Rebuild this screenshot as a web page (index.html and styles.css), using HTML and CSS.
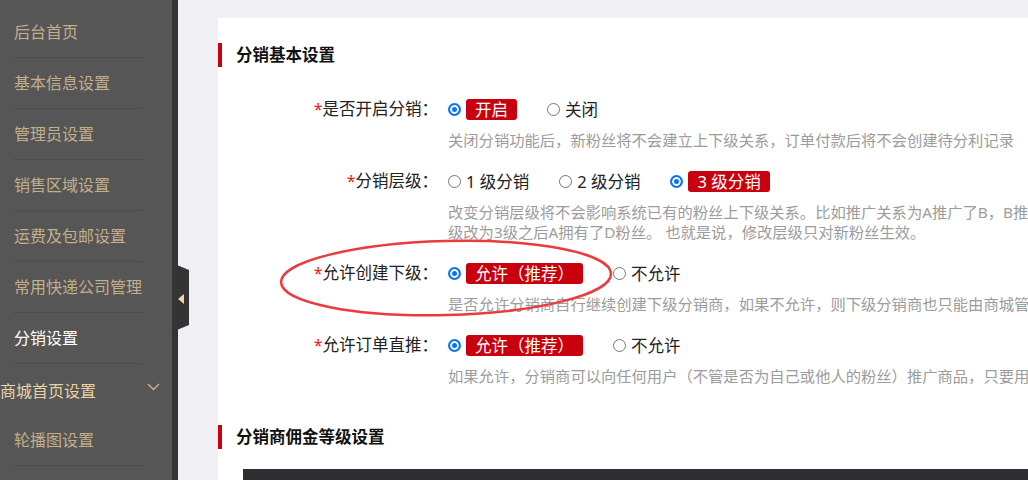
FILE: index.html
```html
<!DOCTYPE html>
<html lang="zh-CN">
<head>
    <meta charset="UTF-8">
    <meta name="viewport" content="width=device-width, initial-scale=1.0">
    <title>分销设置</title>
    <link rel="stylesheet" href="styles.css">
</head>
<body>
    <div class="layout">
        <!-- Sidebar -->
        <div class="sidebar">
            <div class="nav-item">后台首页</div>
            <div class="nav-item">基本信息设置</div>
            <div class="nav-item">管理员设置</div>
            <div class="nav-item">销售区域设置</div>
            <div class="nav-item">运费及包邮设置</div>
            <div class="nav-item">常用快递公司管理</div>
            <div class="nav-item active">分销设置</div>
            <div class="nav-group">
                <span>商城首页设置</span>
                <svg class="chevron" width="13" height="8" viewBox="0 0 13 8"><polyline points="1,1 6.5,6.5 12,1" fill="none" stroke="#c9b58c" stroke-width="1.4"/></svg>
            </div>
            <div class="nav-item">轮播图设置</div>
        </div>

        <div class="strip">
            <div class="toggle"><span class="arrow"></span></div>
        </div>

        <!-- Main content -->
        <div class="main">
            <div class="card">
                <div class="section-title">分销基本设置</div>

                <div class="form">
                    <div class="form-item">
                        <div class="form-label"><span class="req">*</span>是否开启分销：</div>
                        <div class="form-body">
                            <div class="options">
                                <span class="option"><span class="radio on"></span><span class="badge">开启</span></span>
                                <span class="option"><span class="radio"></span>关闭</span>
                            </div>
                            <div class="help">关闭分销功能后，新粉丝将不会建立上下级关系，订单付款后将不会创建待分利记录</div>
                        </div>
                    </div>

                    <div class="form-item">
                        <div class="form-label"><span class="req">*</span>分销层级：</div>
                        <div class="form-body">
                            <div class="options">
                                <span class="option"><span class="radio"></span>1 级分销</span>
                                <span class="option"><span class="radio"></span>2 级分销</span>
                                <span class="option"><span class="radio on"></span><span class="badge">3 级分销</span></span>
                            </div>
                            <div class="help">改变分销层级将不会影响系统已有的粉丝上下级关系。比如推广关系为A推广了B，B推<br>级改为3级之后A拥有了D粉丝。 也就是说，修改层级只对新粉丝生效。</div>
                        </div>
                    </div>

                    <div class="form-item">
                        <div class="form-label"><span class="req">*</span>允许创建下级：</div>
                        <div class="form-body">
                            <div class="options">
                                <span class="option"><span class="radio on"></span><span class="badge">允许（推荐）</span></span>
                                <span class="option"><span class="radio"></span>不允许</span>
                            </div>
                            <div class="help">是否允许分销商自行继续创建下级分销商，如果不允许，则下级分销商也只能由商城管</div>
                        </div>
                    </div>

                    <div class="form-item">
                        <div class="form-label"><span class="req">*</span>允许订单直推：</div>
                        <div class="form-body">
                            <div class="options">
                                <span class="option"><span class="radio on"></span><span class="badge">允许（推荐）</span></span>
                                <span class="option"><span class="radio"></span>不允许</span>
                            </div>
                            <div class="help">如果允许，分销商可以向任何用户（不管是否为自己或他人的粉丝）推广商品，只要用</div>
                        </div>
                    </div>
                </div>

                <div class="section-title second">分销商佣金等级设置</div>
                <div class="table-head"></div>

                <!-- hand-drawn annotation -->
                <svg class="annotation" width="340" height="84" viewBox="0 0 340 84">
                    <ellipse cx="170" cy="42" rx="165" ry="37" fill="none" stroke="#ec3b3d" stroke-width="2.5" transform="rotate(-1.5 170 42)"/>
                </svg>
            </div>
        </div>
    </div>
</body>
</html>
```

FILE: styles.css
```css
/* General */
body {
    margin: 0;
    font-family: "Noto Sans", "Noto Sans CJK SC", sans-serif;
    color: #333333;
    overflow: hidden;
}

.layout {
    display: flex;
    height: 480px;
    overflow: hidden;
}

/* Sidebar */
.sidebar {
    width: 172px;
    flex-shrink: 0;
    background-color: #565656;
    padding-top: 7px;
    font-size: 16px;
    color: #c2b08b;
}

.nav-item {
    margin: 0 30px 0 14px;
    height: 50px;
    line-height: 50px;
    border-bottom: 1px solid #4c4c4c;
    white-space: nowrap;
}

.nav-item.active {
    color: #ffffff;
}

.nav-group {
    display: flex;
    justify-content: space-between;
    align-items: center;
    height: 51px;
    margin-right: 12px;
    color: #e6d3a6;
    white-space: nowrap;
}

.chevron {
    margin-bottom: 6px;
}

/* Dark strip + collapse tab */
.strip {
    position: relative;
    width: 6px;
    flex-shrink: 0;
    background-color: #343434;
}

.toggle {
    position: absolute;
    left: 0;
    top: 263px;
    width: 17px;
    height: 69px;
    background-color: #343434;
    clip-path: polygon(0 0, 100% 10%, 100% 90%, 0 100%);
    z-index: 2;
}

.toggle .arrow {
    position: absolute;
    left: 6px;
    top: 31px;
    width: 0;
    height: 0;
    border-top: 5px solid transparent;
    border-bottom: 5px solid transparent;
    border-right: 6px solid #f0d7a6;
}

/* Main area */
.main {
    flex: 1;
    background-color: #efeff4;
    padding: 18px 0 0 40px;
    overflow: hidden;
}

.card {
    position: relative;
    width: 1100px;
    height: 600px;
    background-color: #ffffff;
    padding-top: 25px;
}

.section-title {
    border-left: 4px solid #c9000e;
    height: 24px;
    line-height: 24px;
    padding-left: 14px;
    font-size: 16.5px;
    font-weight: bold;
    color: #111111;
}

.section-title.second {
    margin-top: 39px;
}

/* Form */
.form {
    margin-top: 31px;
}

.form-item {
    display: flex;
    margin-bottom: 20px;
}

.form-item:last-child {
    margin-bottom: 0;
}

.form-label {
    width: 230px;
    box-sizing: border-box;
    padding-right: 10px;
    text-align: right;
    font-size: 16.5px;
    line-height: 22px;
    color: #222222;
    white-space: nowrap;
}

.req {
    color: #f01818;
    font-size: 16px;
}

.options {
    display: flex;
    align-items: center;
    height: 22px;
    font-size: 16.5px;
    color: #222222;
}

.option {
    display: flex;
    align-items: center;
    margin-right: 30px;
    white-space: nowrap;
}

.radio {
    width: 13px;
    height: 13px;
    box-sizing: border-box;
    border-radius: 50%;
    border: 1px solid #767676;
    background-color: #ffffff;
    margin-right: 5px;
}

.radio.on {
    border: 2px solid #0b75f0;
    background-color: #0b75f0;
    box-shadow: inset 0 0 0 2px #ffffff;
}

.badge {
    display: inline-block;
    height: 21px;
    line-height: 21px;
    padding: 0 9px;
    border-radius: 3px;
    background-color: #c9000e;
    color: #ffffff;
}

.help {
    margin-top: 10px;
    font-size: 15.3px;
    line-height: 20px;
    color: #9c9c9c;
    white-space: nowrap;
}

/* Commission table header */
.table-head {
    margin: 20px 0 0 25px;
    height: 40px;
    background-color: #2f2d31;
}

/* Red circle drawn on the screenshot */
.annotation {
    position: absolute;
    left: 58px;
    top: 218px;
}
```
